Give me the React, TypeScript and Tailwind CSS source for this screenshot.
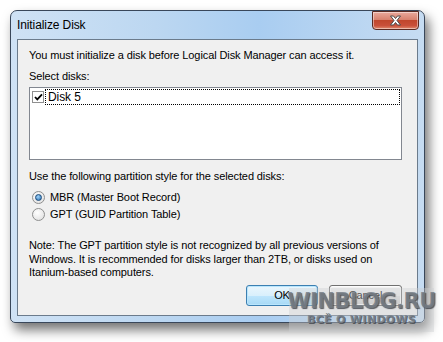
import React from 'react';

function CloseButton() {
  return (
    <div className="flex h-[19px] w-[47px] items-center justify-center rounded-b-[4px] border border-[#5a2a22] bg-[linear-gradient(to_bottom,#e9a99c_0%,#d8826f_45%,#c0462c_50%,#c9503a_80%,#e08a6e_100%)] shadow-[inset_0_0_0_1px_rgba(255,255,255,0.45)]">
      <svg width="13" height="11" viewBox="0 0 13 11">
        <path
          d="M1.5 1 L4.5 1 L6.5 3.5 L8.5 1 L11.5 1 L8 5.5 L11.5 10 L8.5 10 L6.5 7.5 L4.5 10 L1.5 10 L5 5.5 Z"
          fill="#fff"
          stroke="#4a4a4a"
          strokeWidth="1"
          strokeLinejoin="round"
        />
      </svg>
    </div>
  );
}

function Radio({ checked }: { checked?: boolean }) {
  return (
    <span className="flex h-[13px] w-[13px] items-center justify-center rounded-full border border-[#8e8f8f] bg-[radial-gradient(circle_at_40%_35%,#ffffff,#dcdcdc)]">
      {checked && (
        <span className="h-[7px] w-[7px] rounded-full border border-[#1a4a7a] bg-[radial-gradient(circle_at_40%_35%,#9fd3fa,#2a6fb0)]" />
      )}
    </span>
  );
}

function Button({ children, focused }: { children: React.ReactNode; focused?: boolean }) {
  return (
    <div
      className={
        focused
          ? 'flex h-[21px] w-[72px] items-center justify-center rounded-[3px] border border-[#3c7fb1] bg-[linear-gradient(to_bottom,#eaf6fd_0%,#d9f0fc_50%,#bee6fd_51%,#a7d9f5_100%)] shadow-[inset_0_0_0_1px_#b9e6fd]'
          : 'flex h-[21px] w-[73px] items-center justify-center rounded-[3px] border border-[#707070] bg-[linear-gradient(to_bottom,#f2f2f2_0%,#ebebeb_50%,#dddddd_51%,#cfcfcf_100%)] shadow-[inset_0_0_0_1px_#fcfcfc]'
      }
    >
      {children}
    </div>
  );
}

export default function App() {
  return (
    <div className="relative h-[342px] w-[443px] overflow-hidden bg-white pl-[10px] pt-[10px] font-['Liberation_Sans',Arial,sans-serif] text-[11px] tracking-[-0.1px] text-black">
      {/* window */}
      <div className="flex h-[313px] w-[415px] flex-col rounded-t-[7px] rounded-b-[5px] border border-[#39475a] bg-[linear-gradient(to_right,#cfe2f5_0%,#bcd7f1_35%,#a9cdf1_60%,#c6dcf2_100%)] shadow-[4px_7px_12px_rgba(0,0,0,0.55)]">
        {/* title bar */}
        <div className="flex h-[28px] items-start justify-between pl-[6px] pr-[5px]">
          <span className="mt-[7px] text-[12px] leading-[15px]">Initialize Disk</span>
          <CloseButton />
        </div>

        {/* client area */}
        <div className="mx-[6px] mb-[6px] flex flex-1 flex-col border border-[#6b7b8c] bg-[#f0f0f0] pl-[11px] pr-[15px]">
          <p className="mt-[8px] leading-[15px]">You must initialize a disk before Logical Disk Manager can access it.</p>
          <p className="mt-[6px] leading-[15px]">Select disks:</p>

          <div className="mt-[3px] h-[73px] border border-[#828790] bg-white pl-[2px] pr-[1px] pt-[1px]">
            <div className="flex items-center">
              <span className="flex h-[12px] w-[12px] items-center justify-center border border-[#8f8f8f] bg-white">
                <svg width="9" height="8" viewBox="0 0 9 8">
                  <path d="M1 4 L3.3 6.4 L8 1.4" fill="none" stroke="#000" strokeWidth="1.8" />
                </svg>
              </span>
              <span className="ml-[1px] flex-1 border border-dotted border-black pl-[2px] text-[12px] leading-[14px]">Disk 5</span>
            </div>
          </div>

          <p className="mt-[9px] leading-[15px]">Use the following partition style for the selected disks:</p>

          <div className="mt-[6px] flex items-center gap-[5px] pl-[3px] leading-[15px]">
            <Radio checked />
            <span>MBR (Master Boot Record)</span>
          </div>
          <div className="mt-[2px] flex items-center gap-[5px] pl-[3px] leading-[15px]">
            <Radio />
            <span>GPT (GUID Partition Table)</span>
          </div>

          <p className="mt-[17px] leading-[13.5px]">
            Note: The GPT partition style is not recognized by all previous versions of Windows. It is recommended for disks larger than 2TB, or disks used on Itanium-based computers.
          </p>

          <div className="mt-[5px] flex justify-end gap-[11px]">
            <Button focused>OK</Button>
            <Button>Cancel</Button>
          </div>
        </div>
      </div>

      {/* watermark */}
      <div className="absolute left-[289px] top-[288px] flex h-[44px] w-[145px] flex-col items-center bg-[rgba(205,207,210,0.4)] pt-[1px] font-['DejaVu_Sans',sans-serif] font-bold">
        <span className="text-[21px] leading-[24px] tracking-[-0.5px] text-[rgba(120,127,135,0.85)] [text-shadow:1px_1px_1px_rgba(50,55,62,0.8)]">WINBLOG.RU</span>
        <span className="text-[11px] leading-[14px] tracking-[0.3px] text-[rgba(120,127,135,0.85)] [text-shadow:1px_1px_0_rgba(50,55,62,0.7)]">ВСЁ О WINDOWS</span>
      </div>
    </div>
  );
}
